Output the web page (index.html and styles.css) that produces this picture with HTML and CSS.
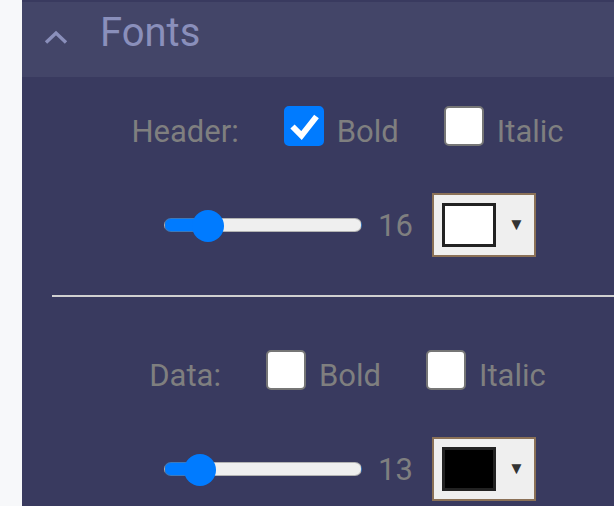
FILE: index.html
```html
<!DOCTYPE html>
<html lang="en">
<head>
    <meta charset="UTF-8">
    <meta name="viewport" content="width=device-width, initial-scale=1.0">
    <title>Fonts</title>
    <link rel="stylesheet" href="styles.css">
</head>
<body>
    <div class="sidebar"></div>
    <div class="panel">
        <div class="panel-header">
            <svg class="chevron" width="24" height="14" viewBox="0 0 24 14">
                <polyline points="2,12.5 12,3 22,12.5" fill="none" stroke="#8a8fbb" stroke-width="3.4"/>
            </svg>
            <span class="panel-title">Fonts</span>
        </div>
        <div class="panel-body">
            <div class="font-section first">
                <div class="font-row">
                    <span class="row-label">Header:</span>
                    <label class="check">
                        <input type="checkbox" checked>
                        <span class="box">
                            <svg width="40" height="40" viewBox="0 0 40 40">
                                <path d="M8.5 20.5 L17.5 29.5 L32.5 10.5" fill="none" stroke="#fff" stroke-width="6"/>
                            </svg>
                        </span>
                        <span class="check-text">Bold</span>
                    </label>
                    <label class="check">
                        <input type="checkbox">
                        <span class="box"></span>
                        <span class="check-text">Italic</span>
                    </label>
                </div>
                <div class="size-row">
                    <input class="size-slider" type="range" min="6" max="66" value="16" style="--fill: 22%">
                    <span class="size-value">16</span>
                    <button class="color-pick">
                        <span class="swatch white"></span>
                        <span class="arrow">&#9660;</span>
                    </button>
                </div>
            </div>
            <hr class="divider">
            <div class="font-section second">
                <div class="font-row">
                    <span class="row-label">Data:</span>
                    <label class="check">
                        <input type="checkbox">
                        <span class="box"></span>
                        <span class="check-text">Bold</span>
                    </label>
                    <label class="check">
                        <input type="checkbox">
                        <span class="box"></span>
                        <span class="check-text">Italic</span>
                    </label>
                </div>
                <div class="size-row">
                    <input class="size-slider" type="range" min="6" max="66" value="13" style="--fill: 18%">
                    <span class="size-value">13</span>
                    <button class="color-pick">
                        <span class="swatch black"></span>
                        <span class="arrow">&#9660;</span>
                    </button>
                </div>
            </div>
        </div>
    </div>
</body>
</html>
```

FILE: styles.css
```css
body {
    margin: 0;
    font-family: Roboto, "Liberation Sans", sans-serif;
    background-color: #f7f8fa;
    display: flex;
    height: 506px;
    overflow: hidden;
}
.sidebar {
    flex: 0 0 22px;
    background-color: #f7f8fa;
}
.panel {
    flex: 0 0 651px;
    background-color: #393a5f;
    padding-top: 2px;
}
.panel-header {
    height: 75px;
    box-sizing: border-box;
    background-color: #434568;
    display: flex;
    align-items: flex-start;
    padding: 11px 0 0 22px;
}
.chevron {
    margin-top: 17px;
    margin-right: 32px;
}
.panel-title {
    font-size: 40px;
    line-height: 40px;
    color: #8a8fbb;
}
.panel-body {
    padding: 0 30px;
}
.font-section.first {
    padding-top: 29px;
    padding-bottom: 38px;
}
.font-section.second {
    padding-top: 53px;
}
.font-row {
    display: flex;
    justify-content: center;
    align-items: flex-end;
    gap: 45px;
}
.row-label, .check-text {
    font-size: 31px;
    line-height: 28px;
    color: #7f7f7f;
}
.check {
    display: inline-flex;
    align-items: flex-end;
    gap: 13px;
    cursor: pointer;
}
.check input {
    display: none;
}
.check .box {
    display: block;
    width: 40px;
    height: 40px;
    box-sizing: border-box;
    background-color: #fff;
    border: 2px solid #767676;
    border-radius: 5px;
}
.check .box svg {
    display: block;
    margin: -2px;
}
.check input:checked + .box {
    background-color: #007bff;
    border-color: #007bff;
}
.size-row {
    display: flex;
    justify-content: center;
    align-items: center;
    margin-top: 47px;
    padding-left: 5px;
}
.size-slider {
    -webkit-appearance: none;
    appearance: none;
    width: 198px;
    height: 32px;
    margin: 0;
    background: transparent;
}
.size-slider::-webkit-slider-runnable-track {
    height: 14px;
    border: 1px solid rgba(120, 120, 120, 0.5);
    border-radius: 8px;
    background: linear-gradient(to right, #007bff var(--fill), #efefef var(--fill));
}
.size-slider::-webkit-slider-thumb {
    -webkit-appearance: none;
    width: 32px;
    height: 32px;
    margin-top: -9px;
    border: none;
    border-radius: 50%;
    background-color: #007bff;
}
.size-value {
    font-size: 31px;
    color: #7f7f7f;
    margin: 0 19px 0 16px;
}
.color-pick {
    width: 104px;
    height: 64px;
    box-sizing: border-box;
    border: 2px solid #8b7157;
    background-color: #efefef;
    display: flex;
    align-items: center;
    padding: 0 0 0 8px;
    cursor: pointer;
}
.swatch {
    width: 54px;
    height: 44px;
    box-sizing: border-box;
    border: 3px solid #222;
}
.swatch.white {
    background-color: #fff;
}
.swatch.black {
    background-color: #000;
}
.arrow {
    font-size: 17px;
    color: #333;
    margin-left: 12px;
}
.divider {
    margin: 0;
    border: none;
    height: 2px;
    background-color: #d0d0d0;
}
```
